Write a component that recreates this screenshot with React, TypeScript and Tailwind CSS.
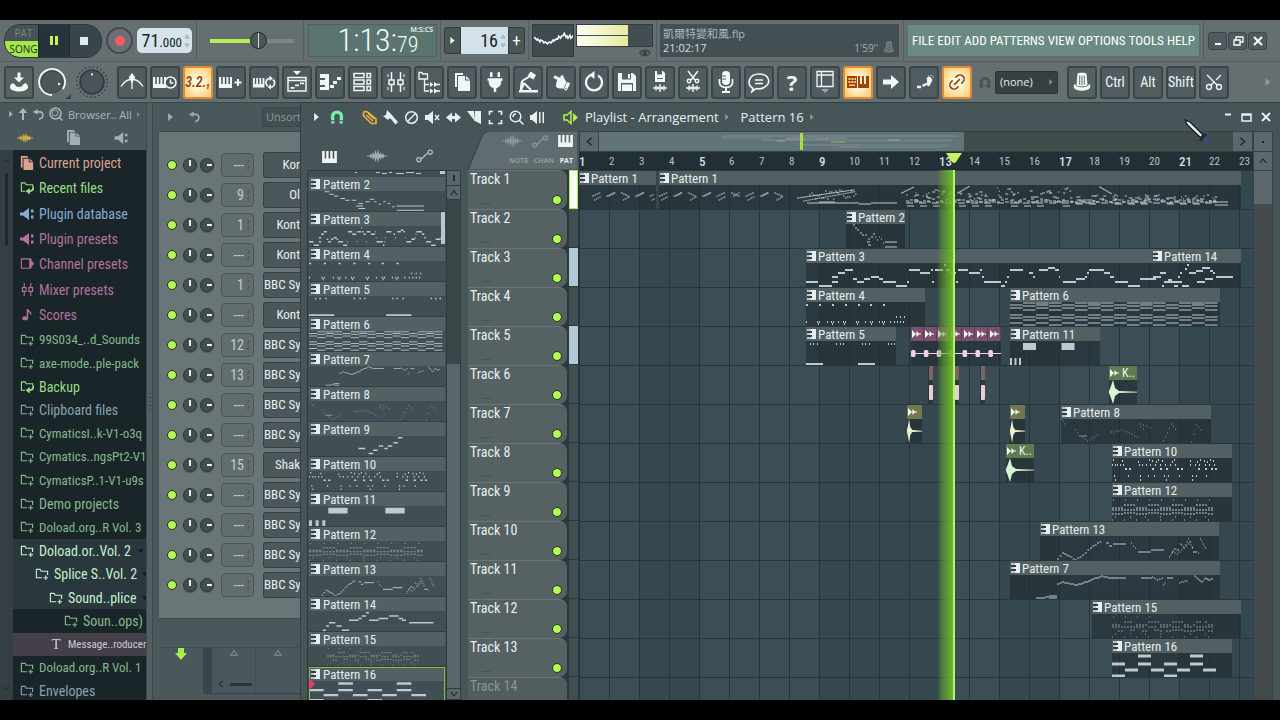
import type { ReactNode } from "react";
import { Link2, Magnet, Scissors } from "lucide-react";
import { FaHandPointRight, FaPlug } from "react-icons/fa";

type Note = [number, number, number];

/* ---------- note data (x, y, length on a 24-unit high strip) ---------- */

function randomizer(seed: number) {
  let s = seed;
  return () => {
    s = (s * 1103515245 + 12345) % 2147483648;
    return s / 2147483648;
  };
}

function runs(list: number[][]): Note[] {
  return list.map(([x, y, w]) => [x, y, w]);
}

const p16 = runs([
  [0, 11, 13], [13, 17, 13], [26, 3, 13], [26, 11, 13], [39, 17, 13], [52, 11, 13],
  [65, 17, 13], [78, 3, 13], [78, 11, 13], [91, 17, 13], [0, 23, 13], [52, 23, 13],
]);

const p3 = runs([
  [0, 19, 12], [13, 23, 13], [26, 14, 6], [26, 19, 6], [32, 10, 7], [39, 7, 8], [47, 16, 4], [51, 19, 7],
  [58, 16, 6], [65, 14, 8], [73, 16, 4], [77, 19, 13], [90, 23, 11], [101, 19, 2], [103, 7, 11],
  [114, 10, 10], [125, 7, 2], [126, 19, 2], [129, 7, 8], [138, 2, 2], [140, 7, 4], [144, 10, 6],
  [150, 19, 2], [152, 7, 10], [163, 10, 11], [174, 7, 2], [176, 14, 2], [178, 19, 17], [195, 23, 4],
  [199, 19, 2], [201, 14, 2], [204, 7, 13], [223, 10, 4], [227, 14, 2], [233, 7, 9], [242, 5, 7],
  [249, 7, 4], [253, 14, 1], [257, 19, 13], [270, 16, 9], [279, 14, 2], [281, 10, 2], [283, 7, 15],
  [298, 10, 6], [304, 14, 4], [309, 19, 13], [322, 23, 12], [334, 16, 13], [347, 14, 6],
]);

const p14 = runs([
  [13, 23, 3], [16, 18, 3], [19, 14, 6], [26, 18, 5], [31, 23, 7], [38, 11, 9], [47, 9, 3], [50, 6, 4],
  [54, 2, 3], [57, 11, 9], [66, 9, 9], [76, 6, 9], [85, 9, 4], [88, 11, 4], [95, 14, 23],
]);

const p14Clip = runs([
  [0, 16, 4], [1, 14, 8], [8, 10, 6], [10, 23, 2], [12, 19, 2], [14, 19, 16], [16, 17, 4], [22, 23, 4],
  [26, 14, 2], [28, 10, 2], [30, 23, 7], [33, 6, 2], [35, 2, 2], [37, 10, 7], [44, 8, 7], [45, 19, 8],
  [50, 5, 8], [53, 16, 8], [58, 8, 3], [61, 10, 2], [64, 14, 17],
]);

const p4: Note[] = [
  ...[0, 13, 26, 39, 52, 64, 77].map((x): Note => [x, 3, 2]),
  ...[0, 11, 13, 21, 25, 27, 32, 37, 39, 50, 52, 59, 64, 66, 73, 76, 78, 84, 88, 91, 94, 97].map((x): Note => [x, 20, 1]),
  ...[12, 26, 38, 51, 65, 77].map((x): Note => [x, 22, 1]),
  ...[90, 94, 98].map((x): Note => [x, 15, 1]),
];

const p5: Note[] = [
  ...[4, 7, 11, 30, 34, 37, 56, 59, 63, 82, 85, 88].map((x): Note => [x, 3, 1]),
  [0, 23, 17],
  [52, 23, 17],
];

const p6: Note[] = Array.from({ length: 16 }, (_, i) => i).flatMap((i) => {
  const even = i % 2 === 0;
  const ys = even ? [3, 6, 13, 16, 21] : [4, 8, 15, 18, 23];
  const extra = i % 4 === 0 ? [] : [1];
  return [...ys, ...extra].map((y): Note => [i * 13, y, 12.6]);
});

const p2 = runs([
  [7, 1, 2], [9, 4, 2], [11, 6, 2], [14, 9, 2], [16, 11, 2], [19, 11, 2], [21, 18, 3], [22, 15, 2], [25, 13, 2],
  [27, 10, 2], [29, 13, 1], [31, 16, 1], [33, 13, 1], [35, 15, 1], [22, 21, 3], [37, 19, 1], [39, 18, 12], [39, 23, 12],
]);

const contour = (pts: number[][], step: number, len: number): Note[] => {
  const out: Note[] = [];
  for (let i = 0; i < pts.length - 1; i++) {
    const [x0, y0] = pts[i];
    const [x1, y1] = pts[i + 1];
    const n = Math.max(1, Math.round((x1 - x0) / step));
    for (let k = 0; k < n; k++) out.push([x0 + ((x1 - x0) * k) / n, Math.round(y0 + ((y1 - y0) * k) / n), len]);
  }
  return out;
};

const p13: Note[] = [
  ...contour([[17, 23], [22, 17], [28, 20], [35, 24], [42, 19], [50, 12], [57, 7], [62, 5]], 2.4, 2),
  [66, 7, 3], [69, 10, 3], [73, 8, 13], [98, 16, 13], [111, 14, 13],
  ...contour([[91, 7], [97, 15]], 2, 1),
  ...contour([[129, 21], [134, 13], [138, 14], [140, 8], [144, 12], [148, 3], [153, 14]], 1.4, 1),
  ...contour([[158, 17], [160, 3], [165, 12], [165, 6]], 1.4, 1),
  ...contour([[132, 16], [137, 18], [150, 6], [154, 17]], 2.2, 1),
  [153, 16, 4],
];

const p7: Note[] = [
  [26, 23, 9], [35, 22, 4], [39, 21, 8], [39, 23, 8],
  ...contour([[47, 9], [52, 7], [64, 10], [72, 8], [80, 5], [91, 1], [100, 3], [104, 3]], 2.2, 2.4),
  [104, 3, 12], [131, 3, 11],
  ...contour([[142, 2], [147, 5], [152, 3], [153, 10], [156, 5]], 2, 1.2),
  [157, 3, 6],
  ...contour([[169, 8], [178, 5]], 2, 1.2),
  ...contour([[184, 1], [191, 7], [195, 3], [198, 5], [203, 3]], 1.2, 1.3),
];

const p8: Note[] = [
  ...contour([[0, 0], [5, 7]], 1.6, 1),
  ...contour([[14, 11], [19, 17], [26, 22], [38, 15]], 2.4, 1),
  ...contour([[50, 13], [60, 11], [68, 14], [76, 18], [79, 8], [85, 12]], 2.8, 1),
  ...contour([[79, 5], [82, 6], [92, 10]], 3, 1),
  ...contour([[102, 22], [110, 5], [116, 12]], 2.2, 1),
  ...contour([[130, 23], [135, 6], [142, 13]], 2.4, 1),
  [18, 17, 4], [22, 17, 4],
];

const p9 = runs([[44, 15, 6], [53, 21, 4], [57, 17, 4], [62, 12, 4], [67, 15, 3], [70, 12, 4], [75, 8, 4], [79, 2, 4]]);

const p10: Note[] = [
  ...[1, 10, 26, 37, 40, 44, 46, 50, 60, 62, 78, 85, 88, 92, 95, 98, 101].map((x, i): Note => [x, 2 + (i % 3), 1]),
  ...[0, 3, 5, 8, 11, 27, 30, 34, 38, 43, 48, 53, 58, 63, 78, 83, 87, 93, 97, 102].map((x): Note => [x, 7, 1]),
  ...[13, 17, 40, 48, 54, 65, 69, 86, 93, 99, 103].map((x): Note => [x, 11, 2]),
  ...[2, 16, 28, 36, 42, 52, 56, 67, 80, 84, 94].map((x): Note => [x, 18, 1]),
  ...[3, 28, 54, 80].map((x): Note => [x, 22, 1]),
];

const p12: Note[] = Array.from({ length: 34 }, (_, i) => i).flatMap((i) => {
  const x = i * 3;
  const up = Math.floor(i / 4) % 2 === 1;
  const rows = up ? [8, 13, 16] : [11, 13, 17];
  const out = rows.map((y): Note => [x, y, 2]);
  if (i % 4 === 0) out.push([x + 1, 3, 1], [x, 23, 1]);
  if (i % 5 === 1) out.push([x, 20, 1]);
  return out;
});

const p15: Note[] = p12.filter((_, i) => i % 5 !== 2).map(([x, y, w]) => [x + 20, y, w]);

function buildP1(): Note[] {
  const out: Note[] = [];
  const r = randomizer(7);
  for (let m = 0; m < 9; m++) {
    const x = m * 14.4;
    const tilt = m % 3 === 2 ? 1 : -1;
    for (let k = 0; k < 4; k++) {
      out.push([x + k * 2.2, 8 + (tilt > 0 ? k : 3 - k), 1.8]);
      out.push([x + 2 + k * 1.8, 12 + (3 - k) - (m % 2) * 4, 1.4]);
    }
  }
  for (let k = 0; k < 24; k++) out.push([138 + k * 2.4, 13 - k * 0.35, 2.2], [144 + k * 2.2, 16 - k * 0.4, 1.6]);
  for (let k = 0; k < 24; k++) out.push([150 + k * 2, 5 + Math.round(r() * 9), 1.6]);
  out.push([148, 18, 26], [160, 17, 16], [174, 18, 26], [200, 19, 12], [212, 18, 12], [224, 18, 14]);
  for (let m = 0; m < 24; m++) {
    const x = 247 + m * 13;
    const end = m > 12;
    const top = end ? 10 : m % 5 === 2 ? 2 : 6;
    for (let k = 0; k < 7; k++) out.push([x + r() * 12, Math.round(top + r() * (18 - top)), 1 + r() * 3]);
    for (let k = 0; k < 3; k++) out.push([x + k * 4, 14 + Math.round(r() * 3), 3]);
    out.push([x, 18, 7], [x + 8, 17, 4]);
    if (m % 4 !== 3) out.push([x + 1, end ? 19 : 21, 7]);
  }
  for (let k = 0; k < 9; k++) out.push([242 + k * 1.4, 8 - k * 0.7, 1.6], [298 + k * 1.4, 8 - k * 0.8, 1.6], [440 + k * 1.4, 2 + k * 0.8, 1.6]);
  out.push([556, 17, 13], [556, 20, 13]);
  return out.filter(([x]) => x < 572);
}

const p1 = buildP1();
const p1Head: Note[] = p1.filter(([x]) => x < 62).map(([x, y, w]) => [x + 13, y, w]);

const patternNotes: Record<number, { notes: Note[]; span: number; weight: number }> = {
  1: { notes: p1, span: 582, weight: 1 },
  2: { notes: p2, span: 60, weight: 1.2 },
  3: { notes: p3, span: 356, weight: 1.8 },
  4: { notes: p4, span: 119, weight: 2 },
  5: { notes: p5, span: 91, weight: 2 },
  6: { notes: p6, span: 210, weight: 1.2 },
  7: { notes: p7, span: 209, weight: 1 },
  8: { notes: p8, span: 150, weight: 1.2 },
  9: { notes: p9, span: 120, weight: 1.8 },
  10: { notes: p10, span: 120, weight: 1.8 },
  12: { notes: p12, span: 120, weight: 1.2 },
  13: { notes: p13, span: 179, weight: 1.2 },
  14: { notes: p14, span: 128, weight: 1.8 },
  15: { notes: p15, span: 149, weight: 1 },
  16: { notes: p16, span: 120, weight: 2.8 },
};

function path(notes: Note[]) {
  return notes.map(([x, y, w]) => `M${x.toFixed(1)} ${y}h${w.toFixed(1)}`).join("");
}

function Notes({ id, width, notes, dim }: { id: number; width: number; notes?: Note[]; dim?: boolean }) {
  if (id === 11)
    return (
      <svg viewBox={`0 0 ${width} 24`} preserveAspectRatio="none" className="block h-full w-full" fill="#bccbd0">
        <path d="M13 2h13v7h-13zM51.500 2h13v7h-13zM0 17h2v7h-2zM4.500 17h2v7h-2zM9 17h2v7h-2z" />
      </svg>
    );
  const p = patternNotes[id];
  return (
    <svg viewBox={`0 0 ${width} 24`} preserveAspectRatio="none" className="block h-full w-full">
      <path d={path(notes ?? p.notes)} stroke={dim ? "#87959a" : "#bccacf"} strokeWidth={p.weight} fill="none" />
    </svg>
  );
}

/* ---------- small glyphs ---------- */

function PianoGlyph() {
  return (
    <svg viewBox="0 0 9 10" className="h-[10px] w-[9px] shrink-0" aria-hidden="true">
      <path d="M0 0h9v10H0z" fill="#e6eef0" />
      <path d="M0 2h5v2H0zM0 6h5v2H0z" fill="#333e42" />
      <path d="M0 0h4v2H0zM0 4h3v2H0zM0 8h4v2H0z" fill="#b9c5c8" />
    </svg>
  );
}

function Keys({ className }: { className: string }) {
  return (
    <svg viewBox="0 0 16 13" className={className} fill="currentColor" aria-hidden="true">
      <path d="M0 0h2.800v8h1.600V0h2.600v8h1.800V0h2.600v8h1.800V0H16v13H0z" />
    </svg>
  );
}

function WaveGlyph({ className }: { className: string }) {
  return (
    <svg viewBox="0 0 20 14" className={className} fill="currentColor" aria-hidden="true">
      <path d="M0 6.500h3L4 4l1 2.500L6 3l1.200 3L8.500 1l1.500 4.500L11 0l1.300 5.500L13.500 3l1 3L16 4l1 2.500h3v1h-3L16 10l-1.500-2-1 3-1.200-2.500L11 14 10 8.500 8.500 13 7.200 8 6 11 5 7.500 4 10 3 7.500H0z" />
    </svg>
  );
}

function CurveGlyph({ className }: { className: string }) {
  return (
    <svg viewBox="0 0 18 14" className={className} fill="none" stroke="currentColor" strokeWidth="1.400" aria-hidden="true">
      <circle cx="3" cy="11" r="2.200" />
      <circle cx="15" cy="3" r="2.200" />
      <path d="M5 10C9 9 9 5 13 4" />
    </svg>
  );
}

function Speaker({ className }: { className: string }) {
  return (
    <svg viewBox="0 0 16 14" className={className} fill="currentColor" aria-hidden="true">
      <path d="M0 5h4l6-5v14L4 9H0zM12 2h3v3h-3zM12 9h3v3h-3z" />
    </svg>
  );
}

function Pages({ className }: { className: string }) {
  return (
    <svg viewBox="0 0 14 16" className={className} fill="currentColor" aria-hidden="true">
      <path d="M0 0h7l2 2H2v11H0z" />
      <path d="M3 3h6v4h5v9H3z" />
      <path d="M10 3l4 3.200h-4z" />
    </svg>
  );
}

function Undo({ className }: { className: string }) {
  return (
    <svg viewBox="0 0 12 12" className={className} aria-hidden="true">
      <path d="M5 0v6L0 3.200z" fill="currentColor" />
      <path d="M4 3.200h3.500c4.500 0 4.500 7-1 7.800" fill="none" stroke="currentColor" strokeWidth="1.800" />
    </svg>
  );
}

function Right({ className }: { className: string }) {
  return (
    <svg viewBox="0 0 6 10" className={className} fill="currentColor" aria-hidden="true">
      <path d="M0 0l6 5-6 5z" />
    </svg>
  );
}

function Horseshoe({ className }: { className: string }) {
  return (
    <svg viewBox="0 0 14 14" className={className} fill="none" stroke="currentColor" strokeWidth="3.400" aria-hidden="true">
      <path d="M3 13.500L2.500 7C2.500 .5 11.500 .5 11.500 7L11 13.500" />
      <path d="M0 10.800h14" stroke="#47545a" strokeWidth="1" />
    </svg>
  );
}

function Chevron({ d, className }: { d: string; className: string }) {
  return (
    <svg viewBox="0 0 10 10" className={className} fill="none" stroke="currentColor" strokeWidth="1.500" aria-hidden="true">
      <path d={d} />
    </svg>
  );
}
const UP = "M1 7.500l4-5 4 5";
const DOWN = "M1 2.500l4 5 4-5";
const LEFT = "M7.500 1l-5 4 5 4";
const RIGHT = "M2.500 1l5 4-5 4";

function Spin() {
  return (
    <span className="ml-[2px] flex flex-col gap-1 text-[#8a979d]">
      <Chevron d="M1 8l4-6 4 6z" className="h-[5px] w-[6px]" />
      <Chevron d="M1 2l4 6 4-6z" className="h-[5px] w-[6px]" />
    </span>
  );
}

function Lamp({ className = "" }: { className?: string }) {
  return (
    <span className={"block h-[10px] w-[10px] shrink-0 rounded-full border border-[#24360f] bg-[#b4f95c] " + className} />
  );
}

/* ---------- transport ---------- */

function Divider() {
  return <span className="h-full w-px shrink-0 bg-[#535d60]" />;
}

function Transport() {
  return (
    <header className="flex h-[41px] shrink-0 items-center bg-[#656f72] pl-1">
      <div className="flex h-[34px] w-[98px] shrink-0 overflow-hidden rounded-[16px] border border-[#2c373b] bg-[#343f44]">
        <div className="flex w-[33px] flex-col text-center font-['Open_Sans',sans-serif] text-[10px]">
          <button className="h-4 bg-[#485256] pl-1 leading-4 text-[#7a8487]">PAT</button>
          <button className="h-4 bg-[#a3e94c] pl-1 leading-4 text-[#1c2a1c]">SONG</button>
        </div>
        <button aria-label="Pause" className="flex w-8 items-center justify-center gap-[2px] border-x border-[#1d272b] bg-[#27333a]">
          <span className="h-[9px] w-[3px] bg-[#c2f45d]" />
          <span className="h-[9px] w-[3px] bg-[#c2f45d]" />
        </button>
        <button aria-label="Stop" className="flex flex-1 items-center justify-center bg-[#39454b] pr-1">
          <span className="h-[8px] w-[8px] bg-[#dfeaf1]" />
        </button>
      </div>
      <button aria-label="Record" className="ml-1 flex h-[27px] w-[27px] shrink-0 items-center justify-center rounded-full border-2 border-[#49474b] bg-[#6a7073]">
        <span className="h-[10px] w-[10px] rounded-full bg-[#fb5b60]" />
      </button>
      <div className="ml-1 flex h-[25px] w-[55px] shrink-0 items-center justify-end rounded-[5px] bg-[#d5e3ea] pr-[2px] text-[#182125]">
        <input aria-label="Tempo" defaultValue="71" className="h-5 w-[19px] bg-transparent text-right text-[18px] leading-none outline-none" />
        <span className="pt-1 text-[13px] leading-none">.000</span>
        <Spin />
      </div>
      <span className="w-1" />
      <Divider />
      <div className="relative ml-[13px] flex h-5 w-[84px] shrink-0 items-center">
        <input aria-label="Main volume" type="range" defaultValue={57} className="absolute inset-0 w-full opacity-0" />
        <span className="h-1 w-[48px] bg-[#b4ec52]" />
        <span className="h-1 flex-1 bg-[#7c8689]" />
        <span className="pointer-events-none absolute left-[40px] flex h-[17px] w-[17px] justify-center rounded-full border border-[#20282b] bg-[#4b5658]">
          <span className="h-full w-px bg-[#cfd8da]" />
        </span>
      </div>
      <span className="w-[9px]" />
      <Divider />
      <div className="ml-1 flex h-[33px] w-[129px] shrink-0 items-start justify-end border border-[#4b6260] bg-[#5b746f] pr-[3px] text-[#f2fbfb]">
        <span className="text-[32px] leading-[31px] font-light">1:13:</span>
        <span className="flex w-[36px] flex-col">
          <span className="text-right font-['Open_Sans',sans-serif] text-[7px] leading-[9px] font-semibold">M:S:CS</span>
          <span className="text-[22px] leading-[21px] font-light">79</span>
        </span>
      </div>
      <span className="w-[3px]" />
      <Divider />
      <div className="ml-[3px] flex h-[27px] w-[81px] shrink-0">
        <button aria-label="Previous pattern" className="flex w-[17px] items-center justify-center rounded-l-[3px] border border-[#323c40] bg-[#4a5558] text-white">
          <Right className="h-[7px] w-[5px]" />
        </button>
        <div className="flex min-w-0 flex-1 items-center justify-end bg-[#d3e1e8] pr-[2px] text-[#182125]">
          <input aria-label="Pattern number" defaultValue="16" className="h-6 w-7 bg-transparent text-right text-[18px] outline-none" />
          <Spin />
        </div>
        <button aria-label="Add pattern" className="w-[17px] rounded-r-[3px] border border-[#323c40] bg-[#4a5558] text-[17px] leading-none text-white">
          +
        </button>
      </div>
      <span className="w-[3px]" />
      <Divider />
      <svg viewBox="0 0 42 33" className="ml-[3px] h-[33px] w-[42px] shrink-0 border border-[#323d40] bg-[#3f4b4f]" aria-label="Scope">
        <path
          d="M1 13l3 3 1-1 2 3 1-2 2 1 1 2 2-1 2 2 2-2 2 1 2-3 1 1 2-2 2 0 1-3 2 2 1-2 2-1 1-2 2 4 1-1 1 2 2-3 1 3 2-2 1-1 1 2"
          fill="none"
          stroke="#eef6f8"
          strokeWidth="1.800"
        />
      </svg>
      <div className="ml-[2px] flex h-[33px] w-[77px] shrink-0 flex-col">
        <div className="flex h-[23px] flex-col gap-px border border-[#323d40] bg-[#424e52]">
          <span className="h-[10px] w-[51px] bg-gradient-to-r from-[#fffff2] to-[#e5e9a0]" />
          <span className="h-[10px] w-[51px] bg-gradient-to-r from-[#fffff2] to-[#e5e9a0]" />
        </div>
        <svg viewBox="0 0 12 8" className="mt-[2px] mr-[2px] h-2 w-3 self-end" fill="none" stroke="#3c4649" strokeWidth="1.400" aria-hidden="true">
          <path d="M.7 4C3 .3 9 .3 11.300 4 9 7.700 3 7.700.700 4z" />
          <circle cx="6" cy="4" r="1.500" fill="#3c4649" />
        </svg>
      </div>
      <span className="w-[3px]" />
      <Divider />
      <div className="ml-[3px] flex h-[33px] min-w-0 flex-1 items-end justify-between bg-[#434f53] px-[3px] pb-[2px] font-['Open_Sans','Noto_Sans_CJK_TC',sans-serif] text-[11px] leading-[14px]">
        <p className="text-[#a9bac2]">
          凱爾特變和風.flp
          <br />
          <span className="text-[#d4dfe3]">21:02:17</span>
        </p>
        <span className="flex items-end gap-1 text-[10px] text-[#a4b0b4]">
          1'59''
          <HatIcon className="h-[16px] w-[14px] text-[#6f7b7e]" />
        </span>
      </div>
      <span className="w-1" />
      <Divider />
      <nav className="ml-[3px] flex h-[33px] w-[293px] shrink-0 items-center justify-between border border-[#56716c] bg-[#6b8a83] px-1 text-[13px] whitespace-nowrap text-white">
        {["FILE", "EDIT", "ADD", "PATTERNS", "VIEW", "OPTIONS", "TOOLS", "HELP"].map((t) => (
          <a key={t} href="#menu">
            {t}
          </a>
        ))}
      </nav>
      <span className="w-[3px]" />
      <Divider />
      <div className="ml-1 flex shrink-0 gap-px pr-[13px]">
        {["M5 11h6", "M4 7h6v5H4zM6 7V4h7v5h-3", "M4 4l8 8M12 4l-8 8"].map((d, i) => (
          <button key={d} aria-label={["Minimize", "Restore", "Close"][i]} className="flex h-[18px] w-[19px] items-center justify-center rounded-[3px] border border-[#3a4548] bg-[#4f5b5e] text-white">
            <svg viewBox="0 0 16 16" className="h-4 w-4" fill="none" stroke="currentColor" strokeWidth={i === 1 ? 1.3 : 2}>
              <path d={d} />
            </svg>
          </button>
        ))}
      </div>
    </header>
  );
}

/* ---------- tool bar ---------- */

function HatIcon({ className }: { className: string }) {
  return (
    <svg viewBox="0 0 24 24" className={className} fill="currentColor" aria-hidden="true">
      <path d="M7 3.500C7 1.500 17 1.500 17 3.500L18 15c0 2.500-12 2.500-12 0z" />
      <path d="M4.500 14C1 17 3 21.500 12 21.500S23 17 19.500 14c1 4.500-14 5.500-15 0z" />
      <path d="M9.500 5v10M12 5.200V15.500M14.500 5v10" stroke="#56625f" strokeWidth="1" />
    </svg>
  );
}

function Svg({ children, sw = 1.5 }: { children: ReactNode; sw?: number }) {
  return (
    <svg viewBox="0 0 24 24" className="h-6 w-6 shrink-0" fill="none" stroke="currentColor" strokeWidth={sw} aria-hidden="true">
      {children}
    </svg>
  );
}

const smallKeys = "M0 7h2.200v7h1.600V7h2v7h1.600V7h2v7h1.600V7h2v11H0z";
const waveform = "M5 18h14M8 15.500v5M10 16.500v3M12 14v8M14 16.500v3M16 15.500v5";

type Tool = { name: string; icon: ReactNode; lit?: boolean };

const tools: Tool[] = [
  {
    name: "Tuner",
    icon: (
      <Svg sw={1.3}>
        <path d="M1 16.500C4 12 7 10 10 9.500M23 16.500C20 12 17 10 14 9.500M12 19V9" />
        <path d="M12 4l2.500 3.500L12 12 9.500 7.500z" fill="currentColor" />
      </Svg>
    ),
  },
  {
    name: "Wait for input",
    icon: (
      <Svg>
        <path d={smallKeys} fill="currentColor" stroke="none" />
        <circle cx="17.500" cy="12.500" r="5.500" fill="#4a5658" />
        <path d="M17.500 9.500v3.500h3" />
      </Svg>
    ),
  },
  { name: "Countdown", lit: true, icon: <span className="text-[14px] font-medium text-[#99380a] italic">3.2.₁</span> },
  {
    name: "Blend recording",
    icon: (
      <Svg sw={2}>
        <path d={smallKeys} fill="currentColor" stroke="none" />
        <path d="M19 9v7M15.500 12.500h7" />
      </Svg>
    ),
  },
  {
    name: "Loop recording",
    icon: (
      <Svg sw={1.7}>
        <path d="M1 8h1.800v6h1.400V8h1.800v6h1.400V8h1.800v6h1.400V8h1.800v9.500H1z" fill="currentColor" stroke="none" />
        <path d="M15.500 16a4.500 4.500 0 0 1 1-7.500h1.500M21 9.500a4.500 4.500 0 0 1-1 7.500h-1.500" />
        <path d="M17.500 5.500l3.500 3-3.500 2.500zM19 14l-3.500 3 3.500 2.500z" fill="currentColor" stroke="none" />
      </Svg>
    ),
  },
  {
    name: "Playlist",
    icon: (
      <Svg>
        <path d="M3 7.500h18V21H3zM3 10.500h18" />
        <path d="M8 1h8l-4 4zM5.500 17h4v1.700h-4zM10 14.500h4v1.700h-4zM15 12.500h4v1.700h-4z" fill="currentColor" stroke="none" />
      </Svg>
    ),
  },
  {
    name: "Piano roll",
    icon: (
      <Svg>
        <path d="M2 4h9v16H2v-3h5v-2H2v-5h5V8H2zM12 15h4v3h-4zM15 11h4v3h-4zM19 7h4v3h-4z" fill="currentColor" stroke="none" />
      </Svg>
    ),
  },
  {
    name: "Channel rack",
    icon: (
      <Svg>
        <path d="M3 3.500h10v4H3zM3 10h10v4H3zM3 16.500h10v4H3zM16 3.500h3.500v4H16zM16 10h3.500v4H16zM16 16.500h3.500v4H16z" />
      </Svg>
    ),
  },
  {
    name: "Mixer",
    icon: (
      <Svg>
        <path d="M7.500 2v8M7.500 14v8M16.500 2v8M16.500 14v8M5 10h5v4.500H5zM14 10h5v4.500h-5z" />
        <path d="M4 4v3M20 4v3M4 17v3M20 17v3" strokeWidth="1" />
      </Svg>
    ),
  },
  {
    name: "Browser",
    icon: (
      <Svg sw={1.3}>
        <path d="M2 2.500h3l1 1.500h4.500V9H2zM7.500 9v12H12M7.500 14.500H12" />
        <path d="M13 12l3.500 2.500L13 17zM17 12l4 2.500-4 2.500zM13 18.500l3.500 2.500-3.500 2.500zM17 18.500l4 2.500-4 2.500z" fill="currentColor" stroke="none" />
        <path d="M20 14.500h3M20 21h3" />
      </Svg>
    ),
  },
  {
    name: "Project picker",
    icon: (
      <Svg>
        <path d="M5 3h8v2H7v12H5z" fill="currentColor" stroke="none" />
        <path d="M8 6h7v4.500h5V21H8zM16 6l4 3.500h-4z" fill="currentColor" stroke="none" />
      </Svg>
    ),
  },
  { name: "Plugin picker", icon: <FaPlug className="h-5 w-5" /> },
  {
    name: "Tempo tapper",
    icon: (
      <Svg sw={2}>
        <path d="M13.500 6.500L6 11M6 11l-1 8M8 13l7 7" />
        <path d="M5 10.500l4 3-3 7H4z" fill="currentColor" stroke="none" />
        <path d="M14.500 1.500L20 5l-2.500 4.500-6-3.500zM3 20h19v2.500H3z" fill="currentColor" stroke="none" />
      </Svg>
    ),
  },
  { name: "Touch controllers", icon: <FaHandPointRight className="h-[18px] w-[18px] -scale-x-100 rotate-[25deg]" /> },
  {
    name: "Reset",
    icon: (
      <Svg sw={2.2}>
        <path d="M8 5.500a8 8 0 1 0 8 0" />
        <path d="M12.500 1v8L7 5z" fill="currentColor" stroke="none" />
      </Svg>
    ),
  },
  {
    name: "Save",
    icon: (
      <Svg>
        <path d="M3 3h15l3 3v15H3z" fill="currentColor" stroke="none" />
        <path d="M7 3h9v6.500H7zM6 13h12v8H6z" fill="#56625f" stroke="none" />
        <path d="M13 4h2v4.500h-2zM7 14.500h10V21H7z" fill="currentColor" stroke="none" />
      </Svg>
    ),
  },
  {
    name: "Render",
    icon: (
      <Svg>
        <path d="M7 1h8l2 2v9H7z" fill="currentColor" stroke="none" />
        <path d="M9 1h5v3.500H9zM9 8h6v1H9z" fill="#56625f" stroke="none" />
        <path d={waveform} strokeWidth="1.400" />
      </Svg>
    ),
  },
  {
    name: "Edison",
    icon: (
      <Svg>
        <path d="M7 1l7 9M17 1l-7 9" />
        <circle cx="8" cy="11" r="1.700" />
        <circle cx="16" cy="11" r="1.700" />
        <path d={waveform} strokeWidth="1.400" />
      </Svg>
    ),
  },
  {
    name: "Record audio",
    icon: (
      <Svg sw={1.8}>
        <rect x="8" y="1" width="8" height="14" rx="4" fill="currentColor" stroke="none" />
        <path d="M8 6h4M8 9h4" stroke="#56625f" strokeWidth="1" />
        <path d="M5.500 9v3.500c0 6.500 13 6.500 13 0V9M12 17.500V22M8 22h8" />
      </Svg>
    ),
  },
  {
    name: "Feedback",
    icon: (
      <Svg sw={1.6}>
        <path d="M6 18.500C-1 14 2 4 12 4s13 9 5 13.500c-3 1.500-6 1.500-8 1L5 21.500zM8 10h8M8 13.500h8" />
      </Svg>
    ),
  },
  { name: "Help", icon: <span className="font-['Open_Sans',sans-serif] text-[22px] leading-none font-bold">?</span> },
  {
    name: "Arrange windows",
    icon: (
      <Svg sw={1.3}>
        <path d="M4 1.500h16v15H4zM4 5h16M8.500 1.500v15" />
        <path d="M8 19h8l-4 4z" fill="#9aa5a8" stroke="none" />
      </Svg>
    ),
  },
  {
    name: "Typing keyboard",
    lit: true,
    icon: (
      <svg viewBox="0 0 24 24" className="h-6 w-6 shrink-0 text-[#a0420c]" fill="currentColor" aria-hidden="true">
        <path d="M1 6h10v12H1zM12 6h2v8h2V6h2v8h2V6h3v12H12z" />
        <path d="M2.500 8h2v2h-2zM5.500 8h2v2h-2zM8.500 8h1.500v2H8.500zM2.500 11h2v2h-2zM5.500 11h2v2h-2zM8.500 11h1.500v2H8.500zM3 14.500h6V16H3z" fill="#ffd27c" />
      </svg>
    ),
  },
  {
    name: "Auto scroll",
    icon: (
      <Svg>
        <path d="M4 9.500h8V5l8 7-8 7v-4.500H4z" fill="currentColor" stroke="none" />
      </Svg>
    ),
  },
  {
    name: "Step edit",
    icon: (
      <Svg>
        <path d="M5 17h4M10.500 16l3.500-2" strokeWidth="2.500" />
        <path d="M15 8l3-1 2 3-3 6-2.500-1.500 1-3zM16 6h1M18.500 5.500h1M20.500 7h1" fill="currentColor" strokeWidth="1" />
      </Svg>
    ),
  },
  { name: "Multilink", lit: true, icon: <Link2 className="h-[20px] w-[20px] -rotate-45 text-[#8f3c0c]" strokeWidth={1.800} /> },
];

const buttonBase =
  "flex h-[33px] w-[30px] shrink-0 items-center justify-center overflow-hidden rounded-[3px] border-2 text-[#f1f6f6] ";
const buttonDark = buttonBase + "border-[#3b4649] bg-[#56625f]";
const buttonTool = buttonBase + "border-[#3b4649] bg-[#505c5f]";
const buttonLit = buttonBase + "border-[#e08a35] bg-[radial-gradient(#fffbe0_20%,#ffc766)]";

function ToolBar() {
  return (
    <div className="flex h-[41px] shrink-0 items-center border-t border-[#566063] bg-[#656f72] pl-1">
      <button aria-label="Install" className={buttonDark}>
        <Svg>
          <path d="M10.500 2.500h3v5H17L12 12.500 7 7.500h3.500z" fill="currentColor" stroke="none" />
          <path d="M5.500 13C1 16 2 21.500 12 21.500S23 16 18.500 13l-3 2c1 2.500-8 2.500-7 0z" fill="currentColor" stroke="none" />
        </Svg>
      </button>
      <svg viewBox="0 0 36 34" className="ml-1 h-[34px] w-9 shrink-0" aria-label="Swing" fill="none">
        <circle cx="14" cy="17" r="11" fill="#4a5659" stroke="#3a4447" />
        <path d="M14 30a13 13 0 1 1 11-6" stroke="#f1f6f6" strokeWidth="1.800" />
        <circle cx="21" cy="19" r="1.200" fill="#e6eced" />
        <path d="M33 29v5h-6z" fill="#3a4447" />
      </svg>
      <svg viewBox="0 0 38 38" className="h-9 w-[38px] shrink-0" aria-label="Pitch" fill="none">
        <circle cx="18" cy="19" r="16" stroke="#333d40" strokeWidth="1.500" strokeDasharray="1.500 2.700" />
        <circle cx="18" cy="19" r="12.500" fill="#48545a" stroke="#333d40" strokeWidth="2" />
        <circle cx="18" cy="11" r="1.200" fill="#e6eced" />
      </svg>
      <div className="ml-[5px] flex shrink-0 gap-[3px]">
        {tools.map((t) => (
          <button key={t.name} aria-label={t.name} className={t.lit ? buttonLit : buttonTool}>
            {t.icon}
          </button>
        ))}
      </div>
      <Horseshoe className="ml-[7px] h-[13px] w-3 shrink-0 text-[#4a5558]" />
      <div className="relative ml-1 flex shrink-0 items-center">
        <select
          aria-label="Snap"
          className="h-[23px] w-[63px] appearance-none rounded-[2px] border border-[#2b3437] bg-[#363f42] px-1 font-['Open_Sans',sans-serif] text-[11px] text-[#e3ebec]"
        >
          <option>(none)</option>
        </select>
        <Right className="pointer-events-none absolute right-[5px] h-[6px] w-1 text-[#7d888b]" />
      </div>
      <div className="ml-[9px] flex shrink-0 gap-[3px]">
        <button aria-label="Tools" className={buttonDark}>
          <HatIcon className="h-[22px] w-[22px]" />
        </button>
        {["Ctrl", "Alt", "Shift"].map((k) => (
          <button key={k} className={buttonTool + " text-[14px]"}>
            {k}
          </button>
        ))}
        <button aria-label="Cut" className={buttonTool}>
          <Scissors className="h-5 w-5 -rotate-90" strokeWidth={1.6} />
        </button>
      </div>
      <span className="flex-1" />
      <Right className="mr-[9px] h-2 w-[6px] shrink-0 text-[#8f999c]" />
    </div>
  );
}

/* ---------- browser ---------- */

type Kind = "pages" | "back" | "db" | "preset" | "channel" | "mixer" | "note" | "folder" | "text";
type Entry = { label: string; kind: Kind; tone: string; indent?: string; row?: string; open?: boolean; size?: string };

const mainEntries: Entry[] = [
  { label: "Current project", kind: "pages", tone: "text-[#dca291]" },
  { label: "Recent files", kind: "back", tone: "text-[#96dd83]" },
  { label: "Plugin database", kind: "db", tone: "text-[#85acd2]" },
  { label: "Plugin presets", kind: "preset", tone: "text-[#b3719f]" },
  { label: "Channel presets", kind: "channel", tone: "text-[#b3719f]" },
  { label: "Mixer presets", kind: "mixer", tone: "text-[#b3719f]" },
  { label: "Scores", kind: "note", tone: "text-[#b3719f]" },
];

const green = "text-[#83b98c]";
const blue = "text-[#86a2b0]";
const bright = "text-[#c3f2d2]";
const small = "text-[13px]";
const folderEntries: Entry[] = [
  { label: "99S034_..d_Sounds", kind: "folder", tone: green, size: small },
  { label: "axe-mode..ple-pack", kind: "folder", tone: green, size: small },
  { label: "Backup", kind: "back", tone: "text-[#96dd83]" },
  { label: "Clipboard files", kind: "folder", tone: blue },
  { label: "CymaticsI..k-V1-o3q", kind: "folder", tone: green, size: small },
  { label: "Cymatics..ngsPt2-V1", kind: "folder", tone: green, size: small },
  { label: "CymaticsP..1-V1-u9s", kind: "folder", tone: green, size: small },
  { label: "Demo projects", kind: "folder", tone: green },
  { label: "Doload.org..R Vol. 3", kind: "folder", tone: green, size: small },
  { label: "Doload.or..Vol. 2", kind: "folder", tone: bright, row: "bg-[#2a373c]", open: true },
  { label: "Splice S..Vol. 2", kind: "folder", tone: bright, indent: "pl-[22px]", row: "bg-[#2a373c]", open: true },
  { label: "Sound..plice", kind: "folder", tone: bright, indent: "pl-[36px]", row: "bg-[#2a373c]", open: true },
  { label: "Soun..ops)", kind: "folder", tone: green, indent: "pl-[51px]" },
  { label: "Message..roducer", kind: "text", tone: "text-[#c9cdd2]", indent: "pl-[36px]", row: "bg-[#453f4a]", size: "text-[11px]" },
  { label: "Doload.org..R Vol. 1", kind: "folder", tone: green, size: small },
  { label: "Envelopes", kind: "folder", tone: blue },
];

function EntryIcon({ kind }: { kind: Kind }) {
  const c = "h-[14px] w-[14px] shrink-0";
  if (kind === "pages") return <Pages className={c} />;
  if (kind === "db" || kind === "preset")
    return (
      <svg viewBox="0 0 14 14" className={c} fill="currentColor">
        <path d="M0 5.500h3L9 1v12L3 8.500H0zM11 2.500h2.500v3H11zM11 8.500h2.500v3H11z" />
      </svg>
    );
  if (kind === "text") return <span className="w-[14px] shrink-0 text-center font-['Liberation_Serif',serif] text-[15px] leading-none">T</span>;
  const shapes: Record<string, ReactNode> = {
    back: (
      <>
        <path d="M5 11H1V2h4l1 2h7v2" />
        <path d="M13.500 6c1 4-2 5-4 5" strokeWidth="2" />
        <path d="M10 7.500v7L5.500 11z" fill="currentColor" stroke="none" />
      </>
    ),
    folder: (
      <>
        <path d="M7 11.500H1v-9h4l1 2h7v4" />
        <path d="M11 9v5M8.500 11.500h5" />
      </>
    ),
    channel: (
      <>
        <path d="M1 2h9v10H1z" />
        <path d="M10 2h2v3h2v4h-2v3h-2z" fill="currentColor" stroke="none" />
      </>
    ),
    mixer: <path d="M4 0v5M4 9v5M11 0v5M11 9v5M2 5h4v4H2zM9 5h4v4H9z" />,
    note: (
      <>
        <ellipse cx="5" cy="11" rx="3" ry="2.200" fill="currentColor" stroke="none" />
        <path d="M7.500 11V1c0 3 4 3 3.500 6" strokeWidth="1.600" />
      </>
    ),
  };
  return (
    <svg viewBox="0 0 14 15" className={c} fill="none" stroke="currentColor" strokeWidth="1.200">
      {shapes[kind]}
    </svg>
  );
}

function EntryRow({ e }: { e: Entry }) {
  return (
    <li className={"flex min-h-0 flex-1 items-center gap-[5px] pr-[2px] whitespace-nowrap " + (e.indent ?? "pl-[7px]") + " " + e.tone + " " + (e.row ?? "")}>
      <EntryIcon kind={e.kind} />
      <span className={"leading-none " + (e.size ?? "text-[14px]")}>{e.label}</span>
      {e.open && (
        <svg viewBox="0 0 8 5" className="ml-auto h-1 w-[6px] shrink-0" fill="#121b1e">
          <path d="M0 0h8L4 5z" />
        </svg>
      )}
    </li>
  );
}

function Browser() {
  return (
    <aside className="flex w-[153px] shrink-0 border-t border-[#3a4649] bg-[#4b585b]">
      <div className="flex w-[146px] flex-col">
        <div className="flex h-[22px] shrink-0 items-center gap-[5px] pl-[9px] text-[#aab6b8]">
          <Right className="h-[6px] w-[4px]" />
          <svg viewBox="0 0 10 12" className="h-3 w-[10px]" fill="currentColor">
            <path d="M5 0l4.500 5H6v7H4V5H.500z" />
          </svg>
          <Undo className="h-[11px] w-[11px]" />
          <svg viewBox="0 0 14 14" className="h-[14px] w-[14px]" fill="none" stroke="currentColor" strokeWidth="1.500">
            <circle cx="6.500" cy="6.500" r="5.500" />
            <circle cx="6" cy="6" r="3" strokeWidth="1" />
            <path d="M10.500 10.500l3 3" />
          </svg>
          <span className="font-['Open_Sans',sans-serif] text-[11px] leading-none whitespace-nowrap">Browser.. All</span>
          <Right className="h-[5px] w-[3px] text-[#7c888b]" />
        </div>
        <div className="flex h-[25px] shrink-0 items-center justify-around">
          <WaveGlyph className="h-3 w-[16px] text-[#cfa94a]" />
          <Pages className="h-[15px] w-[13px] text-[#a3aeb0]" />
          <Speaker className="h-3 w-[15px] text-[#a3aeb0]" />
        </div>
        <div className="flex min-h-0 flex-1">
          <div className="flex w-[13px] shrink-0 flex-col items-center justify-between bg-[#353f43] py-2 text-[#20292c]">
            <Chevron d={UP} className="h-[7px] w-[7px]" />
            <span className="mt-2 h-[72px] w-[3px] bg-[#1e272b]" />
            <span className="flex-1" />
            <Chevron d={DOWN} className="h-[7px] w-[7px]" />
          </div>
          <ul className="flex min-w-0 flex-1 flex-col overflow-hidden bg-[#1a2529]">
            <li className="shrink-0">
              <ul className="flex h-[178px] flex-col">
                {mainEntries.map((e) => (
                  <EntryRow key={e.label} e={e} />
                ))}
              </ul>
            </li>
            <li className="shrink-0">
              <ul className="flex h-[375px] flex-col">
                {folderEntries.map((e) => (
                  <EntryRow key={e.label} e={e} />
                ))}
              </ul>
            </li>
          </ul>
        </div>
      </div>
      <div className="flex flex-1 flex-col items-center justify-center gap-[3px] border-x border-[#3c484b] bg-[#535f62]">
        {[0, 1, 2, 3, 4].map((i) => (
          <span key={i} className="h-px w-[2px] bg-[#333e41]" />
        ))}
      </div>
    </aside>
  );
}

/* ---------- channel rack ---------- */

const channels: [string, string][] = [
  ["---", "Kor"], ["9", "Ol"], ["1", "Kont"], ["---", "Kont"], ["1", "BBC Sy"],
  ["---", "Kont"], ["12", "BBC Sy"], ["13", "BBC Sy"], ["---", "BBC Sy"], ["---", "BBC Sy"],
  ["15", "Shak"], ["---", "BBC Sy"], ["---", "BBC Sy"], ["---", "BBC Sy"], ["---", "BBC Sy"],
];

function Knob({ side }: { side?: boolean }) {
  return (
    <span className="relative flex h-[14px] w-[14px] shrink-0 rounded-full border border-[#2f383b] bg-[#434e51] shadow-[0_1px_1px_#4a5558]">
      <span className={side ? "absolute top-[5px] left-[6px] h-[2px] w-[5px] bg-[#e8eff0]" : "absolute top-px left-[5px] h-[6px] w-[2px] bg-[#e8eff0]"} />
    </span>
  );
}

function ChannelRack() {
  return (
    <section className="flex w-[147px] shrink-0 flex-col overflow-hidden border-t border-[#3a4649] bg-[#4b585b] pl-[6px]">
      <div className="flex h-[28px] shrink-0 items-center pl-[9px] text-[#a1adaf]">
        <Right className="h-2 w-[5px]" />
        <Undo className="ml-4 h-3 w-[11px]" />
        <span className="ml-auto h-5 w-[38px] border border-r-0 border-[#3a4649] bg-[#434f52] pl-[3px] font-['Open_Sans',sans-serif] text-[11px] leading-[18px] text-[#8b979a]">Unsort</span>
      </div>
      <ul className="flex h-[487px] shrink-0 flex-col border-t border-[#3e494c] bg-[#697577] pt-[18px]">
        {channels.map(([num, name], i) => (
          <li key={i} className="flex h-[30px] shrink-0 items-center pl-2">
            <Lamp />
            <span className="ml-[6px] flex gap-[3px]">
              <Knob />
              <Knob side />
            </span>
            <span className="ml-[7px] flex h-6 w-[33px] shrink-0 items-center justify-end rounded-[4px] border border-[#4a5558] bg-[#626d70] pr-[2px] text-[14px] text-[#c2cccd]">
              {num}
              <span className="ml-[2px] flex flex-col gap-[2px] text-[#3f4a4d]">
                <Chevron d={RIGHT} className="h-[5px] w-[5px]" />
                <Chevron d={LEFT} className="h-[5px] w-[5px]" />
              </span>
            </span>
            <button className="ml-[9px] h-[26px] flex-1 rounded-l-[3px] border border-r-0 border-[#363f43] bg-[#4b575b] text-right text-[13px] whitespace-nowrap text-[#e7eeef]">{name}</button>
          </li>
        ))}
      </ul>
      <div className="h-[29px] shrink-0 border-t border-[#3e494c]" />
      <div className="flex min-h-0 flex-1 border-t border-[#414d50] text-[#768285]">
        <div className="flex w-11 justify-end pr-4">
          <svg viewBox="0 0 12 12" className="h-3 w-3" fill="#a6f04d">
            <path d="M3 0h6v5h3l-6 7-6-7h3z" />
          </svg>
        </div>
        <div className="h-[46px] w-[9px] bg-[#39454a]" />
        <div className="flex h-[46px] flex-1 border-b border-[#39454a]">
          <div className="relative flex w-11 justify-center border-r border-[#444f53] pt-px">
            <Chevron d="M1 8l4-6 4 6z" className="h-2 w-[10px]" />
            <Chevron d={LEFT} className="absolute top-8 left-[5px] h-2 w-2 text-[#2a3438]" />
            <span className="absolute top-[35px] left-[18px] h-[3px] w-[22px] bg-[#2a3438]" />
          </div>
          <div className="flex w-11 justify-center pt-px">
            <Chevron d="M1 8l4-6 4 6z" className="h-2 w-[10px]" />
          </div>
        </div>
      </div>
    </section>
  );
}

/* ---------- playlist ---------- */

function PlaylistHeader() {
  return (
    <div className="flex h-[28px] shrink-0 items-center pl-[13px] text-[#e9f0f1]">
      <Right className="h-2 w-[5px]" />
      <Horseshoe className="ml-[11px] h-[14px] w-[14px] text-[#7ceeb0]" />
      <div className="ml-[18px] flex items-center gap-[6px]">
        <svg viewBox="0 0 15 15" className="h-[15px] w-[15px]" fill="none" stroke="#f0b13f" strokeWidth="1.600">
          <path d="M1.500 3.500C1 1.500 4 1 5.500 2L14 9v4.500H9.500L1.500 6zM4 5l7 6M6 3.500l6.500 5.500" />
        </svg>
        <svg viewBox="0 0 15 15" className="h-[15px] w-[15px]" fill="currentColor">
          <path d="M4 0l5 5-4 5-5-4 3-1zM9 5l1.500 2 4.500 5-2.500 2.500L8 9 6 8z" />
        </svg>
        <svg viewBox="0 0 15 15" className="h-[15px] w-[15px]" fill="none" stroke="currentColor" strokeWidth="1.500">
          <circle cx="7.500" cy="7.500" r="5.800" />
          <path d="M11.500 3.500l-8 8" />
        </svg>
        <svg viewBox="0 0 15 15" className="h-[15px] w-[15px]" fill="currentColor">
          <path d="M0 5h3l5-4v13l-5-4H0z" />
          <path d="M10 5l4 5M14 5l-4 5" stroke="currentColor" strokeWidth="1.400" />
        </svg>
        <svg viewBox="0 0 15 15" className="h-[15px] w-[15px]" fill="currentColor">
          <path d="M0 7.500l6-5v3.500h3V2.500l6 5-6 5V9H6v3.500z" />
        </svg>
        <svg viewBox="0 0 15 15" className="h-[15px] w-[15px]" fill="currentColor">
          <path d="M0 1h7v9zM8 1h6v13l-7-3.500zM10 9h2v2h-2z" />
        </svg>
        <svg viewBox="0 0 15 15" className="h-[15px] w-[15px]" fill="none" stroke="currentColor" strokeWidth="1.700">
          <path d="M1.500 5V1.500H5M10 1.500h3.500V5M13.500 10v3.500H10M5 13.500H1.500V10" />
        </svg>
        <svg viewBox="0 0 15 15" className="h-[15px] w-[15px]" fill="none" stroke="currentColor" strokeWidth="1.500">
          <circle cx="6.500" cy="6.500" r="5.300" />
          <path d="M10.500 10.500l4 4M4 7a3 3 0 0 1 3-3" />
        </svg>
        <svg viewBox="0 0 15 15" className="h-[15px] w-[15px]" fill="currentColor">
          <path d="M0 5h2l5-4v13l-5-4H0zM9 2h1.500v11H9zM12.500 2H14v11h-1.500z" />
        </svg>
      </div>
      <svg viewBox="0 0 15 15" className="ml-[18px] h-[15px] w-[15px]" fill="none" stroke="#b4f24e" strokeWidth="1.500">
        <path d="M1 5h3l4-3.500v12L4 10H1z" />
        <path d="M10 3v9l5-4.500z" fill="#b4f24e" stroke="none" />
      </svg>
      <h1 className="ml-[7px] flex items-center gap-[6px] font-['Open_Sans',sans-serif] text-[13px] leading-none whitespace-nowrap">
        Playlist - Arrangement
        <Right className="h-[6px] w-1 text-[#8b979a]" />
        <span className="pl-[6px]">Pattern 16</span>
        <Right className="h-[6px] w-1 text-[#8b979a]" />
      </h1>
      <div className="ml-auto flex gap-[5px] pr-[7px]">
        {["M4 4.500h6", "M2 4h9v7H2zM2 5h9", "M3 3l8 8M11 3l-8 8"].map((d, i) => (
          <button key={d} aria-label={["Minimize playlist", "Maximize playlist", "Close playlist"][i]}>
            <svg viewBox="0 0 14 14" className="h-[14px] w-[14px]" fill="none" stroke="currentColor" strokeWidth={i === 1 ? 1.5 : 2}>
              <path d={d} />
            </svg>
          </button>
        ))}
      </div>
    </div>
  );
}

function Picker() {
  const ids = Array.from({ length: 15 }, (_, i) => i + 2);
  return (
    <div className="flex w-[154px] shrink-0 flex-col">
      <div className="flex h-[39px] shrink-0 items-end justify-between px-[15px] pb-[7px] pr-7">
        <Keys className="h-3 w-[15px] text-[#f0f5f5]" />
        <WaveGlyph className="h-[14px] w-5 text-[#a4afb1]" />
        <CurveGlyph className="h-[14px] w-[17px] text-[#b4bec0]" />
      </div>
      <div className="flex min-h-0 flex-1">
        <ul className="flex w-[139px] shrink-0 flex-col overflow-hidden border-t border-l border-[#2f3b3f] bg-[#414f55] pr-px pl-px">
          <li className="h-[6px] shrink-0 overflow-hidden">
            <svg viewBox="0 0 136 5" className="h-[5px] w-full" fill="#bccbd0">
              <path d="M46 1h2v1h-2zM67 1h4v1h-4zM73 2h5v1h-5zM80 1h3v1h-3zM87 2h8v1h-8zM97 1h8v1h-8zM107 2h5v1h-5zM131 0h5v3h-5z" />
            </svg>
          </li>
          {ids.map((id) => (
            <li key={id} className="relative h-[35px] shrink-0 border-b border-[#333f44]">
              <button className="flex h-[14px] w-full items-center gap-[3px] bg-[#536064] pl-[2px] text-[13px] leading-none text-[#e3ebec]">
                <PianoGlyph />
                Pattern {id}
              </button>
              <div className="h-[20px] w-[135px]">
                <Notes id={id} width={id === 11 ? 91 : patternNotes[id].span} dim={id === 8 || id === 12 || id === 15} />
              </div>
              {id === 3 && <span className="absolute top-0 right-0 h-8 w-1 bg-[#b6c9d1]" />}
              {id === 16 && (
                <>
                  <span className="pointer-events-none absolute inset-x-0 top-0 h-9 border border-[#7fc23c]" />
                  <svg viewBox="0 0 6 12" className="absolute top-[11px] left-0 h-3 w-[6px]" fill="#f0386a">
                    <path d="M0 0l6 6-6 6z" />
                  </svg>
                </>
              )}
            </li>
          ))}
        </ul>
        <div className="flex flex-1 flex-col border border-[#2f3b3f] bg-[#3b4649] text-[#222c2f]">
          <span className="flex h-[15px] shrink-0 items-center justify-center border-b border-[#2f3b3f] bg-[#5a6669]">
            <span className="h-[6px] w-[2px] bg-current" />
          </span>
          <span className="flex h-[14px] shrink-0 items-center justify-center border-b border-[#2f3b3f] bg-[#5a6669]">
            <Chevron d={UP} className="h-2 w-2" />
          </span>
          <span className="h-[164px] shrink-0" />
          <span className="min-h-0 flex-1 bg-[#5a6669]" />
          <span className="flex h-[11px] shrink-0 items-center justify-center border-t border-[#2f3b3f] bg-[#5a6669]">
            <Chevron d={DOWN} className="h-2 w-2" />
          </span>
        </div>
      </div>
    </div>
  );
}

function TrackHeads() {
  return (
    <div className="flex w-[111px] shrink-0 flex-col overflow-hidden">
      <div className="flex h-[39px] shrink-0">
        <div className="relative flex w-[110px] flex-col justify-between pb-1 pl-[34px]">
          <svg viewBox="0 0 110 39" preserveAspectRatio="none" className="absolute inset-0 h-full w-full" aria-hidden="true">
            <path d="M0 39L14 5Q17 0 23 0H110V39z" fill="#606c6f" stroke="#333f43" />
          </svg>
          <div className="relative flex items-center justify-between pt-[3px] pr-[5px] text-[#8b9699]">
            <WaveGlyph className="h-[14px] w-5" />
            <CurveGlyph className="h-[13px] w-4" />
            <Keys className="h-3 w-[15px] text-[#f0f5f5]" />
          </div>
          <div className="relative flex items-center justify-between pr-[5px] pl-[7px] font-['Open_Sans',sans-serif] text-[7px] leading-[10px] font-bold text-[#8f9a9d]">
            <span>NOTE</span>
            <span>CHAN</span>
            <span className="text-[#eef4f4]">PAT</span>
          </div>
        </div>
      </div>
      <ul className="flex flex-col">
        {Array.from({ length: 14 }, (_, i) => i + 1).map((n) => (
          <li key={n} className="flex h-[39px] shrink-0 bg-[#2d383c]">
            <div className={"relative w-[99px] rounded-r-[8px] border-t border-[#6a7578] pl-[2px] text-[14px] leading-[17px] " + (n === 14 ? "bg-[#525d60] text-[#8a9598]" : "bg-[#566164] text-[#eaf0f0]")}>
              Track {n}
              {n < 14 && <span className="absolute bottom-[3px] left-[14px] text-[11px] leading-none tracking-wide text-[#333d40]">...</span>}
              {n < 14 && <Lamp className="absolute right-[5px] bottom-[4px]" />}
            </div>
            <span className={"ml-[2px] w-[9px] border-b border-[#2d383c] " + (n === 1 ? "border border-[#a6ef5c] bg-[#f7fff2]" : n === 3 || n === 5 ? "bg-[#b4cad3]" : "bg-[#424e51]")} />
          </li>
        ))}
      </ul>
    </div>
  );
}

type Clip = { id: number; x: number; row: number; w: number; notes?: Note[]; dim?: boolean };

const clips: Clip[] = [
  { id: 1, x: 0, row: 0, w: 77, notes: p1Head },
  { id: 1, x: 80, row: 0, w: 582 },
  { id: 2, x: 267, row: 1, w: 59 },
  { id: 3, x: 227, row: 2, w: 346 },
  { id: 14, x: 573, row: 2, w: 89, notes: p14Clip },
  { id: 4, x: 227, row: 3, w: 119 },
  { id: 6, x: 431, row: 3, w: 210 },
  { id: 5, x: 227, row: 4, w: 90 },
  { id: 11, x: 431, row: 4, w: 90 },
  { id: 8, x: 482, row: 6, w: 150, dim: true },
  { id: 10, x: 533, row: 7, w: 120 },
  { id: 12, x: 533, row: 8, w: 120 },
  { id: 13, x: 461, row: 9, w: 179 },
  { id: 7, x: 431, row: 10, w: 210 },
  { id: 15, x: 513, row: 11, w: 149, dim: true },
  { id: 16, x: 533, row: 12, w: 120 },
];

function PatternClip({ c }: { c: Clip }) {
  return (
    <div className="absolute flex h-[39px] flex-col bg-[#202b30]/60" style={{ left: c.x, top: c.row * 39, width: c.w }}>
      <div className="flex h-[15px] shrink-0 items-center gap-[2px] border-t border-[#26363c] bg-[#536063] pl-px text-[13px] leading-none whitespace-nowrap text-[#e6edee]">
        <PianoGlyph />
        Pattern {c.id}
      </div>
      <div className="min-h-0 flex-1 overflow-hidden">
        <Notes id={c.id} width={c.w} notes={c.notes} dim={c.dim} />
      </div>
    </div>
  );
}

function ClipMark() {
  return (
    <svg viewBox="0 0 9 8" className="h-2 w-[9px] shrink-0" fill="#f6fbef" aria-hidden="true">
      <path d="M0 0l3 3V3.500h1.500V1L7 3.500h2v1H7L4.500 7V4.500H3V5L0 8z" />
    </svg>
  );
}

type Hit = { x: number; row: number; w: number; label?: string; tone: string; wave: string };
const hits: Hit[] = [
  { x: 328, row: 6, w: 15, tone: "bg-[#70774f]", wave: "#eef3cf" },
  { x: 431, row: 6, w: 15, tone: "bg-[#70774f]", wave: "#eef3cf" },
  { x: 530, row: 5, w: 28, label: "K..", tone: "bg-[#5f7b51]", wave: "#d7f4d3" },
  { x: 427, row: 7, w: 28, label: "K..", tone: "bg-[#5f7b51]", wave: "#d7f4d3" },
];

function Overlays() {
  return (
    <>
      <div className="absolute flex h-[38px] flex-col bg-[#202b30]/60" style={{ left: 332, top: 157, width: 90 }}>
        <div className="flex h-[14px] bg-[#7b4f70]">
          {[0, 1, 2, 3, 4, 5, 6].map((i) => (
            <span key={i} className="flex flex-1 items-center justify-center border-r border-[#5d3d57]">
              <ClipMark />
            </span>
          ))}
        </div>
        <svg viewBox="0 0 90 24" className="min-h-0 w-full flex-1" fill="#efcfe9">
          <path d="M0 12h90v1H0z" />
          {[0, 1, 2, 3, 4, 5, 6].map((i) => (
            <rect key={i} x={i * 12.9} y="9" width="4.500" height="7" rx="1.500" />
          ))}
        </svg>
      </div>
      {[349, 375, 401].map((x) => (
        <div key={x} className="absolute flex h-[38px] w-[5px] flex-col items-center bg-[#202b30]/60" style={{ left: x, top: 196 }}>
          <span className="h-[14px] w-1 bg-[#7d675c]" />
          <span className="mt-[5px] h-[15px] w-1 rounded-[1px] bg-[#e8cfd0]" />
        </div>
      ))}
      {hits.map((h) => (
        <div key={`${h.x}-${h.row}`} className="absolute flex h-[38px] flex-col bg-[#202b30]/60" style={{ left: h.x, top: h.row * 39 + 1, width: h.w }}>
          <div className={"flex h-[14px] shrink-0 items-center gap-[3px] pl-px text-[12px] leading-none text-[#eef3e6] " + h.tone}>
            <ClipMark />
            {h.label}
          </div>
          <svg viewBox="0 0 28 24" preserveAspectRatio="none" className="min-h-0 w-full flex-1" fill={h.wave}>
            <path d="M0 11l2-5L4 0l2 8 4 3 18 .8v.8L10 13l-4 3-2 8-2-6-2-5z" />
          </svg>
        </div>
      ))}
      <div className="absolute inset-y-0 left-[359px] w-[17px] border-r-2 border-[#b9f268] bg-gradient-to-r from-[#4f8f24]/30 to-[#6cba2b]" />
    </>
  );
}

const beats = Array.from({ length: 23 }, (_, i) => i + 1);

function Arrangement() {
  return (
    <div className="flex min-w-0 flex-1 flex-col">
      <div className="flex h-[21px] shrink-0 border border-[#374245] bg-[#404b4c]">
        <button aria-label="Scroll left" className="flex w-[19px] shrink-0 items-center justify-center border-r border-[#37443f] bg-[#5c686b] text-[#202a2d]">
          <Chevron d={LEFT} className="h-[9px] w-[9px]" />
        </button>
        <div className="min-w-0 flex-1">
          <svg viewBox="0 0 365 19" preserveAspectRatio="none" className="h-full w-[365px] bg-[#61747a]" aria-label="Overview">
            <path d="M123 4h236M163 8h190M188 6h60M200 13h60M240 15h100" stroke="#75878d" strokeWidth="1.500" />
            <path d="M123 5h50v2h-50zM240 7h110v3H240zM260 12h90v3h-90z" fill="#6a7d83" />
            <path d="M178 9h8M232 10h14M289 8h12" stroke="#9fb163" strokeWidth="1.200" />
            <path d="M186 7h20M218 7h12" stroke="#a489a0" strokeWidth="1" />
            <path d="M201 1h3v17h-3z" fill="#a8dd4a" />
          </svg>
        </div>
        <button aria-label="Scroll right" className="flex w-[19px] shrink-0 items-center justify-center bg-[#5c686b] text-[#202a2d]">
          <Chevron d={RIGHT} className="h-[9px] w-[9px]" />
        </button>
      </div>
      <div className="relative flex h-[18px] shrink-0 items-center overflow-hidden bg-[#223036] text-[#b5c2c6]">
        {beats.map((b) => (
          <span key={b} className={"w-[30px] shrink-0 leading-none " + (b % 4 === 1 ? "text-[13px] font-medium text-[#d4dee0]" : "text-[11px]")}>
            {b}
          </span>
        ))}
        <svg viewBox="0 0 16 11" className="absolute top-px left-[367px] h-[11px] w-4" fill="#c3f65b">
          <path d="M0 0h16l-6 9q-2 2-4 0z" />
        </svg>
      </div>
      <div className="relative min-h-0 flex-1 overflow-hidden bg-[#3b4e55] bg-[repeating-linear-gradient(to_right,#25353b_0,#25353b_1px,transparent_1px,transparent_30px),repeating-linear-gradient(to_bottom,#26363c_0,#26363c_1px,transparent_1px,transparent_39px),repeating-linear-gradient(to_right,transparent_0,transparent_60px,#36484f_60px,#36484f_120px,transparent_120px,transparent_240px,#36484f_240px,#36484f_360px)]">
        {clips.map((c) => (
          <PatternClip key={`${c.id}-${c.x}`} c={c} />
        ))}
        <Overlays />
      </div>
    </div>
  );
}

function Playlist() {
  return (
    <section className="relative flex min-w-0 flex-1 flex-col overflow-hidden border-t border-l border-[#333f43] bg-[#475458]">
      <PlaylistHeader />
      <div className="flex min-h-0 flex-1 pl-[6px]">
        <Picker />
        <span className="w-[7px] shrink-0" />
        <TrackHeads />
        <Arrangement />
        <div className="flex w-5 shrink-0 flex-col border border-[#374245] bg-[#434a4b] text-[#202a2d]">
          <span className="flex h-5 items-center justify-center border-b border-[#374245] bg-[#5c686b]">
            <span className="h-[2px] w-[2px] bg-current" />
          </span>
          <span className="flex h-[19px] items-center justify-center border-b border-[#374245] bg-[#5c686b]">
            <Chevron d={UP} className="h-2 w-2" />
          </span>
          <span className="h-[33px] bg-[#5c686b]" />
        </div>
        <span className="w-[7px] shrink-0" />
      </div>
      <svg viewBox="0 0 27 27" className="absolute top-[16px] right-[69px] h-[27px] w-[27px]" aria-hidden="true">
        <path d="M1 1l5 2 13 13-2.500 2.500L3.500 6z" fill="#eef1f4" stroke="#10161a" strokeWidth="1.200" />
        <path d="M22 15l-6 7" stroke="#1a2440" strokeWidth="2.500" />
        <path d="M20 19l5 5" stroke="#3d4d80" strokeWidth="3.500" />
      </svg>
    </section>
  );
}

export default function App() {
  return (
    <div className="flex h-screen w-full flex-col overflow-hidden bg-black py-5 font-['Roboto_Condensed',sans-serif]">
      <Transport />
      <ToolBar />
      <main className="flex min-h-0 flex-1">
        <Browser />
        <ChannelRack />
        <Playlist />
      </main>
    </div>
  );
}
